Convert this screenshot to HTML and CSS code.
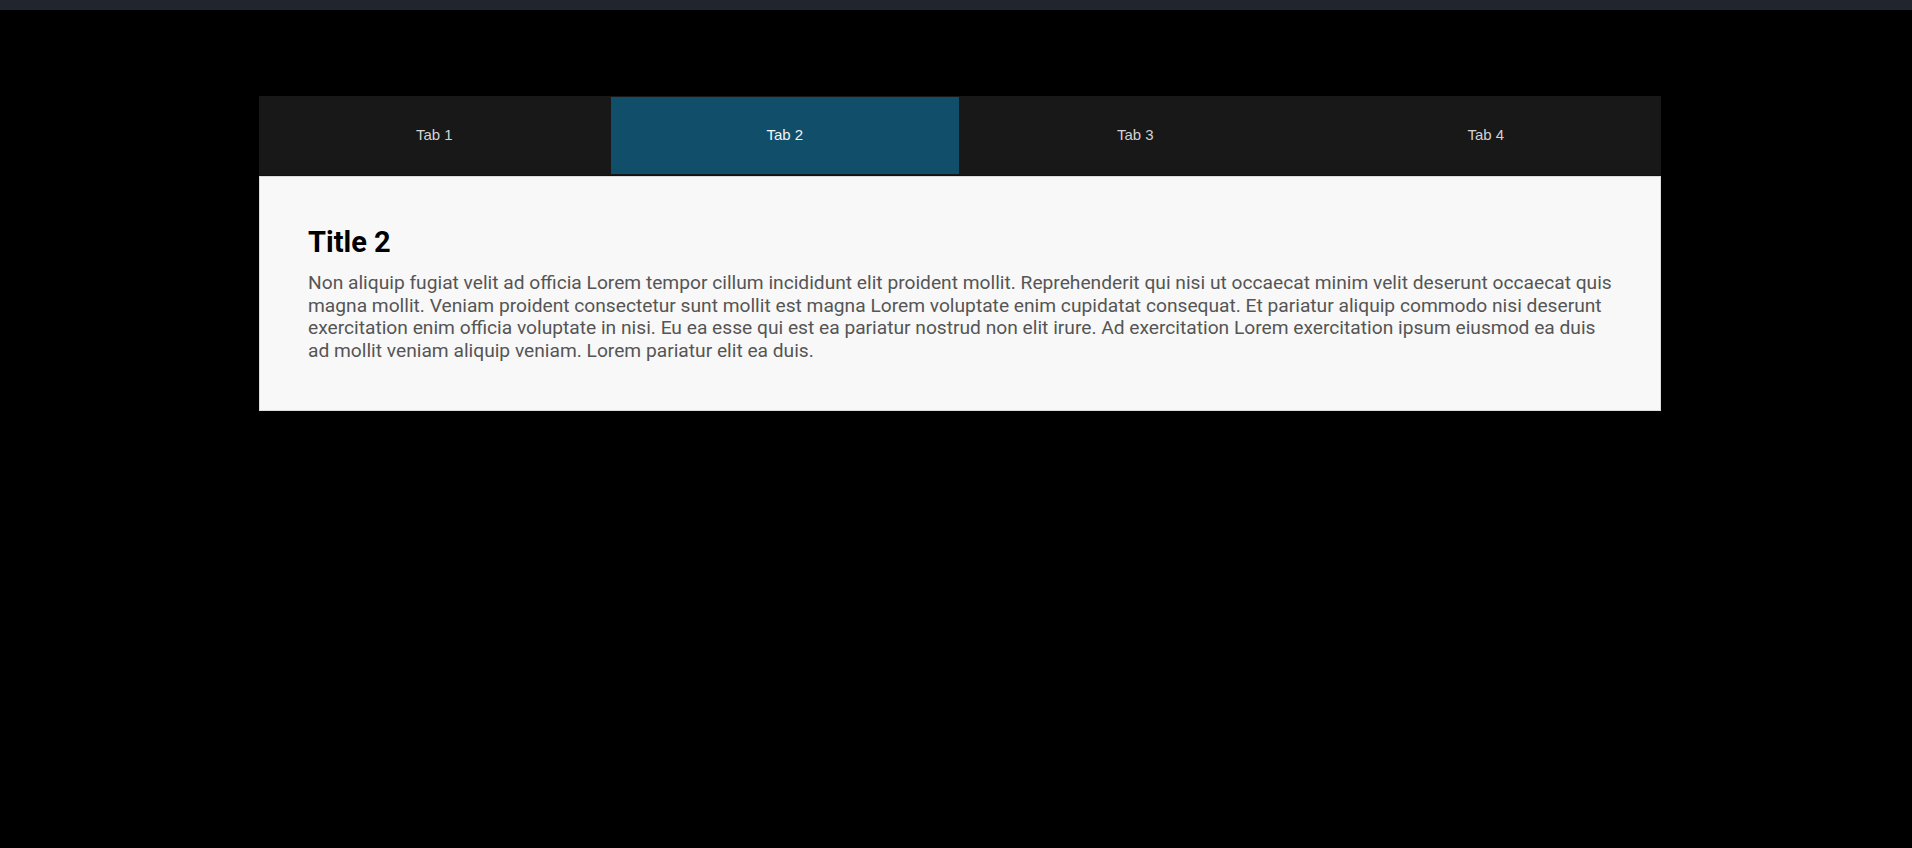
FILE: index.html
```html
<!DOCTYPE html>
<html lang="en">
<head>
<meta charset="utf-8">
<title>Tabs</title>
<link rel="stylesheet" href="styles.css">
</head>
<body>
<div class="topbar"></div>
<main class="page">
  <div class="tabs">
    <nav class="tab-list">
      <button class="tab">Tab 1</button>
      <button class="tab active">Tab 2</button>
      <button class="tab">Tab 3</button>
      <button class="tab">Tab 4</button>
    </nav>
    <section class="panel">
      <h2 class="panel-title">Title 2</h2>
      <p class="panel-text">Non aliquip fugiat velit ad officia Lorem tempor cillum incididunt elit proident mollit. Reprehenderit qui nisi ut occaecat minim velit deserunt occaecat quis magna mollit. Veniam proident consectetur sunt mollit est magna Lorem voluptate enim cupidatat consequat. Et pariatur aliquip commodo nisi deserunt exercitation enim officia voluptate in nisi. Eu ea esse qui est ea pariatur nostrud non elit irure. Ad exercitation Lorem exercitation ipsum eiusmod ea duis ad mollit veniam aliquip veniam. Lorem pariatur elit ea duis.</p>
    </section>
  </div>
</main>
</body>
</html>
```

FILE: styles.css
```css
html, body {
  margin: 0;
  padding: 0;
  background: #000;
}

body {
  font-family: Roboto, "Liberation Sans", Arial, sans-serif;
  min-height: 848px;
}

.topbar {
  height: 10px;
  background: #21252d;
}

.page {
  padding-top: 86px;
  padding-left: 259px;
}

.tabs {
  width: 1402px;
}

.tab-list {
  display: flex;
  height: 80px;
  background: #181818;
  border-bottom: 1px solid #111;
  box-sizing: border-box;
}

.tab {
  flex: 1 1 0;
  border: 1px solid #181818;
  background: transparent;
  color: #d2d2d2;
  font-family: "Liberation Sans", Arial, sans-serif;
  font-size: 15px;
  padding: 0 0 2px;
  margin: 0;
  cursor: pointer;
}

.tab.active {
  background: #114e6a;
  color: #f4f4f4;
}

.panel {
  background: #f8f8f8;
  border: 1px solid #dcdcdc;
  padding: 49px 48px 47px 48px;
}

.panel-title {
  margin: 0 0 12px;
  font-size: 29px;
  font-weight: 700;
  color: #000;
  line-height: 1.17;
}

.panel-text {
  margin: 0;
  font-size: 19.2px;
  line-height: 22.7px;
  color: #555;
}
```
